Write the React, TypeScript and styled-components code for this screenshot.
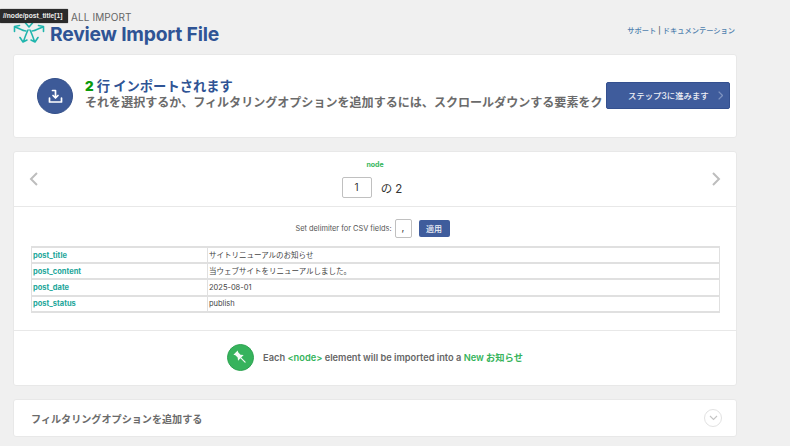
import React from "react";
import styled, { createGlobalStyle } from "styled-components";

const Global = createGlobalStyle`
  html, body { margin: 0; padding: 0; background: #f0f0f0; }
  body { font-family: "Inter", "Liberation Sans", "Noto Sans CJK JP", sans-serif; width: 790px; height: 446px; overflow: hidden; }
  * { box-sizing: border-box; }
`;

const Page = styled.div`
  position: relative;
  width: 790px;
  height: 446px;
  padding: 0 53px 0 13px;
  overflow: hidden;
`;

const Header = styled.header`
  height: 54px;
  display: flex;
  align-items: flex-start;
  justify-content: space-between;
`;

const Brand = styled.div`
  display: flex;
  padding-top: 10px;
  gap: 5px;
`;

const BrandText = styled.div`
  display: flex;
  flex-direction: column;
  padding-top: 2px;
`;

const Eyebrow = styled.div`
  font-size: 10px;
  line-height: 11px;
  color: #666;
  padding-left: 21px;
  letter-spacing: 0.1px;
`;

const Title = styled.h1`
  margin: 0;
  font-size: 19.3px;
  line-height: 23px;
  font-weight: 700;
  color: #2f5495;
  letter-spacing: -0.2px;
`;

const HelpLinks = styled.div`
  margin-top: 25px;
  margin-right: 2px;
  font-size: 7.25px;
  line-height: 11px;
  color: #4f7fae;
  font-weight: 500;
  & span { color: #555; }
`;

const Tooltip = styled.div`
  position: absolute;
  left: 0;
  top: 9px;
  width: 68px;
  height: 14px;
  background: #2b2b2b;
  color: #eee;
  font-size: 6.7px;
  font-weight: 700;
  line-height: 14px;
  padding-left: 3px;
  border-radius: 1px;
  white-space: nowrap;
  font-family: "Liberation Sans", sans-serif;
  box-shadow: 0 0 1px #000;
`;

const Card = styled.section`
  background: #fff;
  border: 1px solid #e8e8e8;
  border-radius: 3px;
`;

const ImportCard = styled(Card)`
  height: 84px;
  display: flex;
  align-items: center;
  padding: 0 6px 0 23px;
`;

const ImportIcon = styled.div`
  width: 36px;
  height: 36px;
  border-radius: 50%;
  flex: none;
  background: #3d5a98;
  border: 1px solid #34508a;
  display: flex;
  align-items: center;
  justify-content: center;
`;

const ImportText = styled.div`
  flex: 1;
  min-width: 0;
  margin: -3px 2px 0 12px;
  overflow: hidden;
  white-space: nowrap;
`;

const ImportTitle = styled.div`
  font-size: 13.3px;
  line-height: 16px;
  font-weight: 700;
  color: #2f5495;
  & b { color: #0c9a0c; }
`;

const ImportHint = styled.div`
  font-size: 12.05px;
  line-height: 17px;
  font-weight: 700;
  color: #6b6b6b;
`;

const NextButton = styled.button`
  flex: none;
  width: 124px;
  height: 27px;
  margin-top: -2px;
  border: 1px solid #34508f;
  border-radius: 2px;
  background: #3f5c9c;
  color: #eef0f6;
  font: 500 8.4px "Inter", "Noto Sans CJK JP", sans-serif;
  display: flex;
  align-items: center;
  padding: 0 0 0 21px;
  gap: 9px;
  & svg { flex: none; }
`;

const NodeCard = styled(Card)`
  margin-top: 13px;
  height: 235px;
`;

const Pager = styled.div`
  height: 55px;
  display: flex;
  align-items: center;
  justify-content: space-between;
  padding: 0 15px;
  border-bottom: 1px solid #e8e8e8;
`;

const PagerCenter = styled.div`
  display: flex;
  flex-direction: column;
  align-items: center;
  height: 100%;
  padding-top: 8px;
`;

const NodeName = styled.div`
  font-size: 7px;
  line-height: 9px;
  font-weight: 700;
  color: #36b65c;
`;

const PagerRow = styled.div`
  margin: 8px 6px 0 0;
  display: flex;
  align-items: center;
  gap: 9px;
  font-size: 11.5px;
  color: #333;
`;

const PageInput = styled.div`
  width: 30px;
  height: 21px;
  border: 1.5px solid #c0c0c0;
  border-radius: 2px;
  background: #fff;
  font-size: 10px;
  line-height: 19px;
  text-align: center;
  color: #333;
`;

const Delimiter = styled.div`
  height: 39px;
  display: flex;
  align-items: center;
  justify-content: center;
  gap: 3px;
  font-size: 7.4px;
  color: #555;
  padding-top: 4px;
  padding-right: 5px;
`;

const DelimiterInput = styled.div`
  width: 17px;
  height: 19px;
  border: 1.5px solid #c0c0c0;
  border-radius: 2px;
  font-size: 10px;
  line-height: 15px;
  text-align: center;
  color: #333;
`;

const ApplyButton = styled.button`
  margin-left: 4px;
  width: 31px;
  height: 17px;
  border: none;
  border-radius: 2px;
  background: #3f5c9c;
  color: #eef0f6;
  font: 500 8px "Noto Sans CJK JP", sans-serif;
  padding: 0;
`;

const TableWrap = styled.div`
  height: 85px;
  border-bottom: 1px solid #e8e8e8;
  padding: 0 16px 0 17px;
`;

const DataTable = styled.table`
  width: 100%;
  border-collapse: collapse;
  table-layout: fixed;
`;

const KeyCell = styled.td`
  width: 176px;
  height: 16.2px;
  border: 1px solid #e0e0e0;
  border-width: 2px 1px;
  padding: 0 0 0 1px;
  font-size: 7.5px;
  font-weight: 700;
  color: #23a69a;
  line-height: 13px;
`;

const ValueCell = styled.td`
  height: 16.2px;
  border: 1px solid #e0e0e0;
  border-width: 2px 1px;
  padding: 0 0 0 1px;
  font-size: 7.5px;
  color: #444;
  line-height: 13px;
`;

const Notice = styled.div`
  height: 53px;
  display: flex;
  align-items: center;
  justify-content: center;
  gap: 9px;
  font-size: 9.25px;
  font-weight: 600;
  color: #666;
  & em { font-style: normal; color: #34b35a; }
`;

const NoticeText = styled.span`
  margin-top: -1px;
`;

const PinBadge = styled.div`
  width: 27px;
  height: 27px;
  border-radius: 50%;
  background: #36b35c;
  border: 1px solid #2ea352;
  display: flex;
  align-items: center;
  justify-content: center;
`;

const FilterCard = styled(Card)`
  margin-top: 13px;
  height: 38px;
  display: flex;
  align-items: center;
  justify-content: space-between;
  padding: 0 14px 0 17px;
`;

const FilterLabel = styled.div`
  font-size: 10.1px;
  font-weight: 700;
  color: #6b6b6b;
`;

const ChevronCircle = styled.div`
  width: 18px;
  height: 18px;
  border-radius: 50%;
  border: 1px solid #e2e2e2;
  display: flex;
  align-items: center;
  justify-content: center;
`;

const rows = [
  ["post_title", "サイトリニューアルのお知らせ"],
  ["post_content", "当ウェブサイトをリニューアルしました。"],
  ["post_date", "2025-08-01"],
  ["post_status", "publish"],
];

const Logo = () => (
  <svg width="32" height="33" viewBox="0 0 32 33" fill="none" stroke="#1fb5ad" strokeWidth="1.6" strokeLinecap="round" strokeLinejoin="round">
    <path d="M12 10 A6 6 0 1 1 20 10" />
    <path d="M12.5 13 L16 17 L19.5 13" />
    <path d="M13 21 C10 21 7 19 2.5 17 M1.5 21.5 L1.5 16.5 L6.5 15.5" />
    <path d="M19 21 C22 21 25 19 29.5 17 M30.5 21.5 L30.5 16.5 L25.5 15.5" />
    <path d="M15 20 C13 24 12 27 10.5 31.5 M7 27.5 L10 32 L14 30" />
    <path d="M17 20 C19 24 20 27 21.5 31.5 M25 27.5 L22 32 L18 30" />
  </svg>
);

const Chevron = ({ dir, size = 14, color = "#bdbdbd" }: { dir: "left" | "right"; size?: number; color?: string }) => (
  <svg width={size * 0.64} height={size} viewBox="0 0 9 14" fill="none" stroke={color} strokeWidth="2">
    <path d={dir === "left" ? "M8 1 L2 7 L8 13" : "M1 1 L7 7 L1 13"} />
  </svg>
);

export default function App() {
  return (
    <Page>
      <Global />
      <Header>
        <Brand>
          <Logo />
          <BrandText>
            <Eyebrow>ALL IMPORT</Eyebrow>
            <Title>Review Import File</Title>
          </BrandText>
        </Brand>
        <HelpLinks>
          サポート <span>|</span> ドキュメンテーション
        </HelpLinks>
      </Header>
      <ImportCard>
        <ImportIcon>
          <svg width="15" height="15" viewBox="0 0 15 15" fill="none" stroke="#fff" strokeWidth="1.7" strokeLinecap="round" strokeLinejoin="round">
            <path d="M4.5 1.5 H7.5 V8.5 M5 6.5 L7.5 9 L10 6.5" />
            <path d="M1.5 9 V13 H13.5 V9" />
          </svg>
        </ImportIcon>
        <ImportText>
          <ImportTitle><b>2</b> 行 インポートされます</ImportTitle>
          <ImportHint>それを選択するか、フィルタリングオプションを追加するには、スクロールダウンする要素をク</ImportHint>
        </ImportText>
        <NextButton>
          ステップ3に進みます
          <Chevron dir="right" size={9} color="#7d92bf" />
        </NextButton>
      </ImportCard>
      <NodeCard>
        <Pager>
          <Chevron dir="left" />
          <PagerCenter>
            <NodeName>node</NodeName>
            <PagerRow>
              <PageInput>1</PageInput>
              <span>の 2</span>
            </PagerRow>
          </PagerCenter>
          <Chevron dir="right" />
        </Pager>
        <Delimiter>
          Set delimiter for CSV fields:
          <DelimiterInput>,</DelimiterInput>
          <ApplyButton>適用</ApplyButton>
        </Delimiter>
        <TableWrap>
          <DataTable>
            <tbody>
              {rows.map(([k, v]) => (
                <tr key={k}>
                  <KeyCell>{k}</KeyCell>
                  <ValueCell>{v}</ValueCell>
                </tr>
              ))}
            </tbody>
          </DataTable>
        </TableWrap>
        <Notice>
          <PinBadge>
            <svg width="15" height="15" viewBox="0 0 15 15" fill="#f4fbf6">
              <g transform="rotate(-45 7.5 7.5)">
                <path d="M4.5 0.5 H10.5 L9.5 2.2 V5.5 L11.5 8 H3.5 L5.5 5.5 V2.2 Z" />
                <path d="M7.5 8 V14" stroke="#f4fbf6" strokeWidth="1.2" strokeLinecap="round" />
              </g>
            </svg>
          </PinBadge>
          <NoticeText>Each <em>&lt;node&gt;</em> element will be imported into a <em>New お知らせ</em></NoticeText>
        </Notice>
      </NodeCard>
      <FilterCard>
        <FilterLabel>フィルタリングオプションを追加する</FilterLabel>
        <ChevronCircle>
          <svg width="9" height="6" viewBox="0 0 9 6" fill="none" stroke="#c4c4c4" strokeWidth="1.1">
            <path d="M1 1 L4.5 4.5 L8 1" />
          </svg>
        </ChevronCircle>
      </FilterCard>
      <Tooltip>//node/post_title[1]</Tooltip>
    </Page>
  );
}
